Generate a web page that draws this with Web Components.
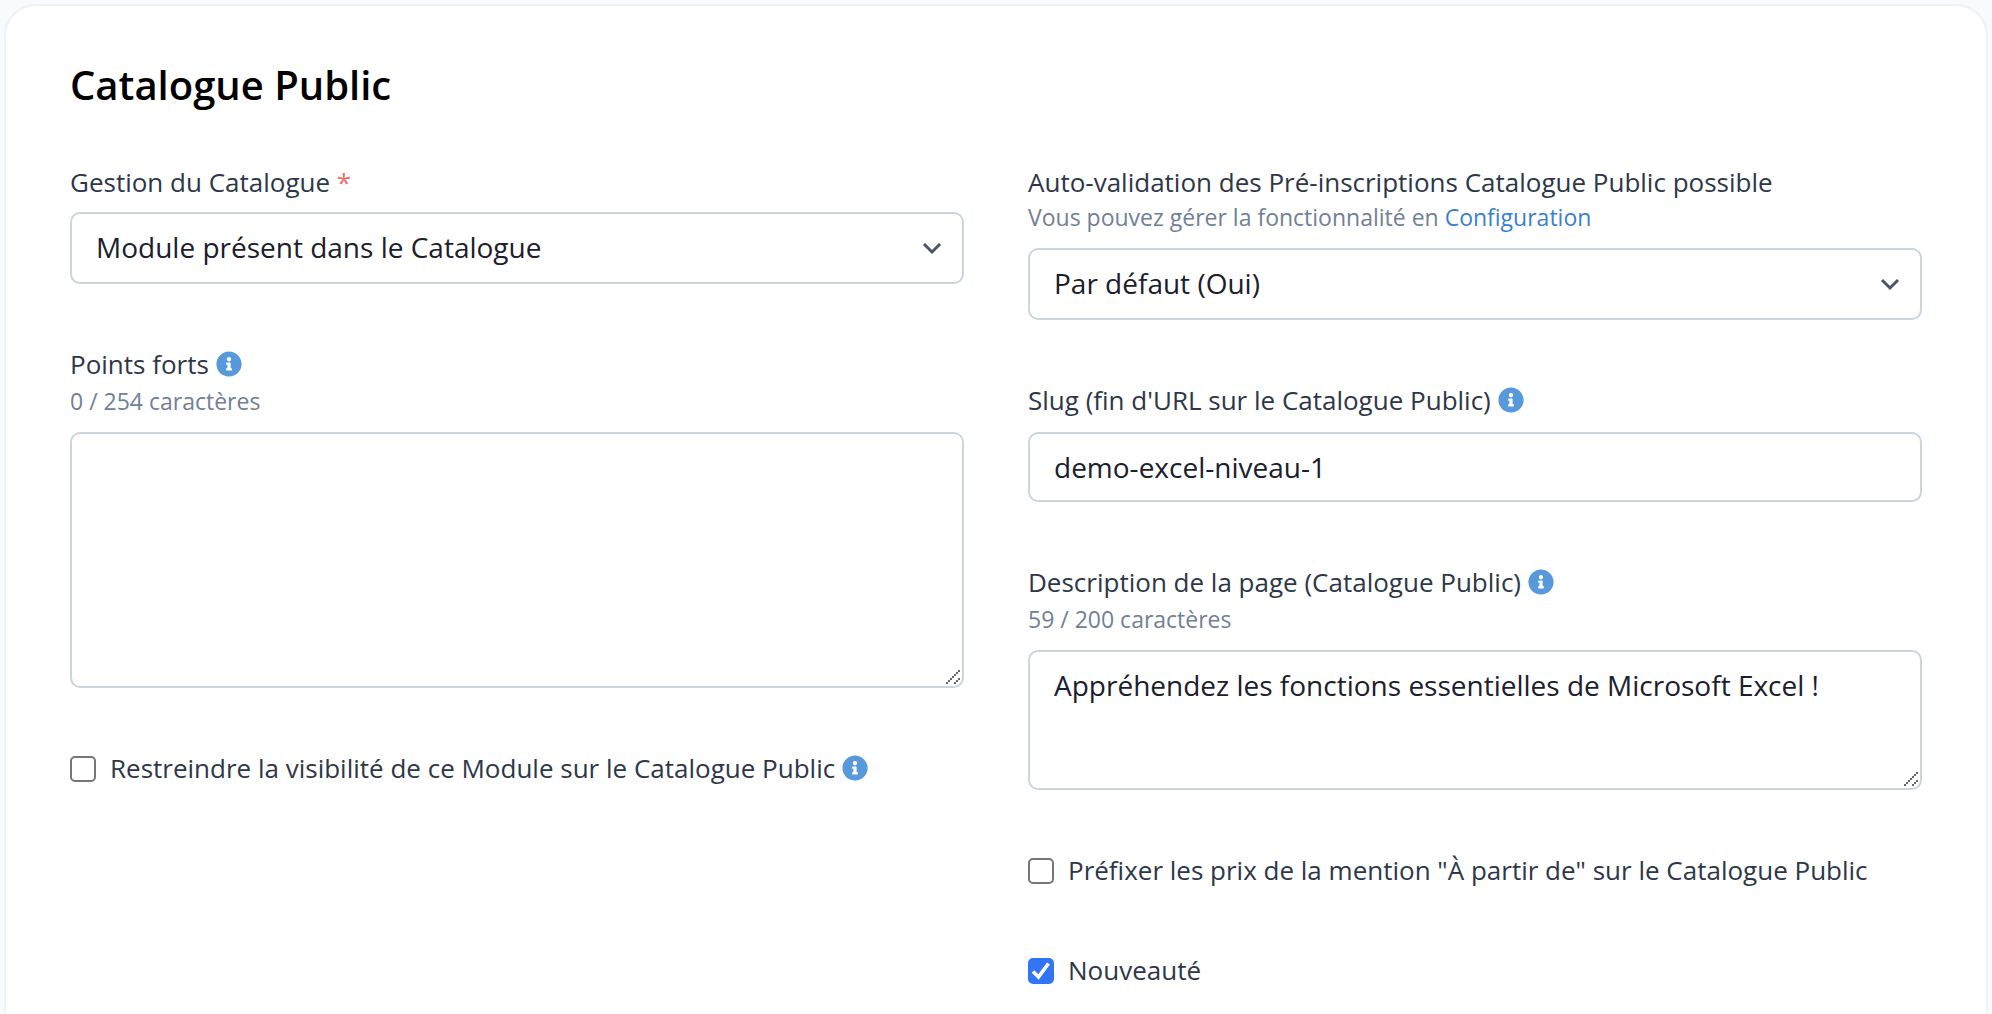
<!DOCTYPE html>
<html lang="fr">
<head>
<meta charset="utf-8">
<meta name="viewport" content="width=device-width, initial-scale=1">
<title>Catalogue Public</title>
<style>
  html { scrollbar-width: none; }
  body {
    margin: 0;
    padding: 4px;
    background: #f7fbfc;
    color: #2d3748;
    font-family: "Open Sans", "Noto Sans", sans-serif;
    font-size: 26px;
  }
</style>
</head>
<body>
<settings-card heading="Catalogue Public">
  <field-column>
    <select-field label="Gestion du Catalogue" required options="Module présent dans le Catalogue|Module absent du Catalogue"></select-field>
    <area-field label="Points forts" info rows="5" max="254"></area-field>
    <check-field label="Restreindre la visibilité de ce Module sur le Catalogue Public" info></check-field>
  </field-column>
  <field-column>
    <select-field label="Auto-validation des Pré-inscriptions Catalogue Public possible" options="Par défaut (Oui)|Oui|Non">
      <field-hint slot="hint">Vous pouvez gérer la fonctionnalité en <hint-link href="#configuration">Configuration</hint-link></field-hint>
    </select-field>
    <text-field label="Slug (fin d'URL sur le Catalogue Public)" info value="demo-excel-niveau-1"></text-field>
    <area-field label="Description de la page (Catalogue Public)" info rows="2" max="200" count="59" value="Appréhendez les fonctions essentielles de Microsoft Excel !"></area-field>
    <check-field label='Préfixer les prix de la mention "À partir de" sur le Catalogue Public'></check-field>
    <check-field label="Nouveauté" checked></check-field>
  </field-column>
</settings-card>

<script>
const esc = s => (s || '').replace(/&/g, '&amp;').replace(/"/g, '&quot;').replace(/</g, '&lt;');

class Base extends HTMLElement {
  connectedCallback() {
    if (this.shadowRoot) return;
    this.attachShadow({ mode: 'open' }).innerHTML = this.render();
  }
  attr(name) { return esc(this.getAttribute(name)); }
}

customElements.define('settings-card', class extends Base {
  render() {
    return `<style>
      :host { display: block; box-sizing: border-box; padding: 48px 64px; background: #fff;
              border: 2px solid #edf2f7; border-radius: 32px; }
      h2 { margin: 0 0 48px; font-size: 40px; line-height: 62px; font-weight: 600; color: #000; }
      .columns { display: grid; grid-template-columns: repeat(2, minmax(0, 1fr)); gap: 64px; }
    </style>
    <h2>${this.attr('heading')}</h2>
    <div class="columns"><slot></slot></div>`;
  }
});

customElements.define('field-column', class extends Base {
  render() {
    return `<style>:host { display: flex; flex-direction: column; gap: 60px; }</style><slot></slot>`;
  }
});

customElements.define('field-hint', class extends Base {
  render() {
    return `<style>:host { display: block; padding-bottom: 2px; font-size: 23px; line-height: 34px; color: #718096; }</style><slot></slot>`;
  }
});

customElements.define('hint-link', class extends Base {
  render() {
    return `<style>:host { display: inline; } a { color: #3a7fd2; text-decoration: none; }</style>` +
      `<a href="${this.attr('href')}"><slot></slot></a>`;
  }
});

customElements.define('info-icon', class extends Base {
  render() {
    return `<style>:host { display: block; flex: none; width: 26px; height: 26px; } svg { display: block; }</style>
    <svg width="26" height="26" viewBox="0 0 512 512" aria-hidden="true"><path fill="#5899dc" d="M256 8C119.043 8 8 119.083 8 256c0 136.997 111.043 248 248 248s248-111.003 248-248C504 119.083 392.957 8 256 8zm0 110c23.196 0 42 18.804 42 42s-18.804 42-42 42-42-18.804-42-42 18.804-42 42-42zm56 254c0 6.627-5.373 12-12 12h-88c-6.627 0-12-5.373-12-12v-24c0-6.627 5.373-12 12-12h12v-64h-12c-6.627 0-12-5.373-12-12v-24c0-6.627 5.373-12 12-12h64c6.627 0 12 5.373 12 12v100h12c6.627 0 12 5.373 12 12v24z"/></svg>`;
  }
});

class Field extends Base {
  render() {
    const info = this.hasAttribute('info');
    return `<style>
      :host { display: block; }
      .label { display: flex; align-items: center; gap: 7px; line-height: ${info ? 40 : 36}px; }
      .required { color: #ee6a6a; }
      .box { display: grid; margin-top: 12px; }
      .box > * { grid-area: 1 / 1; }
      .control { display: block; box-sizing: border-box; width: 100%; margin: 0; padding: 12px 24px;
        border: 2px solid #cbd5e0; border-radius: 10px; background: #fff; color: #1a202c;
        font-family: inherit; font-size: 28px; line-height: 42px; outline: none; }
      svg { pointer-events: none; }
      ${this.css()}
    </style>
    <div class="label"><label for="control">${this.attr('label')}${
      this.hasAttribute('required') ? ' <span class="required">*</span>' : ''}</label>${
      info ? '<info-icon></info-icon>' : ''}</div>
    ${this.hint()}
    <div class="box">${this.control()}</div>`;
  }
  hint() { return '<slot name="hint"></slot>'; }
}

customElements.define('select-field', class extends Field {
  css() {
    return `select.control { appearance: none; height: 72px; padding-bottom: 14px; }
      svg { justify-self: end; align-self: center; margin-right: 21px; }`;
  }
  control() {
    const options = this.getAttribute('options').split('|').map(o => `<option>${esc(o)}</option>`).join('');
    return `<select class="control" id="control">${options}</select>
      <svg width="22" height="16" viewBox="0 0 22 16" aria-hidden="true"><path d="M3 4l8 8 8-8" fill="none" stroke="#4a5568" stroke-width="3"/></svg>`;
  }
});

customElements.define('text-field', class extends Field {
  css() { return ''; }
  control() {
    return `<input class="control" id="control" type="text" value="${this.attr('value')}">`;
  }
});

customElements.define('area-field', class extends Field {
  css() {
    return `textarea { resize: none; overflow: hidden; }
      textarea[rows="2"] { height: 140px; }
      textarea[rows="5"] { height: 256px; }
      svg { place-self: end; margin: 4px; }`;
  }
  hint() {
    return `<field-hint>${this.getAttribute('count') || 0} / ${this.attr('max')} caractères</field-hint>`;
  }
  control() {
    const dots = [[0,12],[2,10],[4,8],[6,6],[8,4],[10,2],[12,0],[8,12],[10,10],[12,8]]
      .map(([x, y]) => `M${x} ${y}h2v2h-2z`).join('');
    return `<textarea class="control" id="control" rows="${this.attr('rows')}" maxlength="${this.attr('max')}">${this.attr('value')}</textarea>
      <svg width="14" height="14" viewBox="0 0 14 14" aria-hidden="true"><path fill="#666" d="${dots}"/></svg>`;
  }
});

customElements.define('check-field', class extends Base {
  render() {
    return `<style>
      :host { display: flex; align-items: center; gap: 7px; line-height: 40px; }
      label { display: flex; align-items: center; gap: 14px; }
      .tick { display: grid; flex: none; padding-top: 2px; }
      .tick > * { grid-area: 1 / 1; }
      input { appearance: none; box-sizing: border-box; width: 26px; height: 26px; margin: 0;
        border: 2px solid #767676; border-radius: 5px; background: #fff; }
      input:checked { border-color: #3275f4; background: #3275f4; }
      svg { visibility: hidden; pointer-events: none; }
      input:checked + svg { visibility: visible; }
    </style>
    <label><span class="tick"><input type="checkbox"${this.hasAttribute('checked') ? ' checked' : ''}>
      <svg width="26" height="26" viewBox="0 0 26 26" aria-hidden="true"><path d="M5 13.500l5.500 5.500L20.500 5.500" fill="none" stroke="#fff" stroke-width="3.600"/></svg></span>
      <span>${this.attr('label')}</span></label>${this.hasAttribute('info') ? '<info-icon></info-icon>' : ''}`;
  }
});
</script>
</body>
</html>
